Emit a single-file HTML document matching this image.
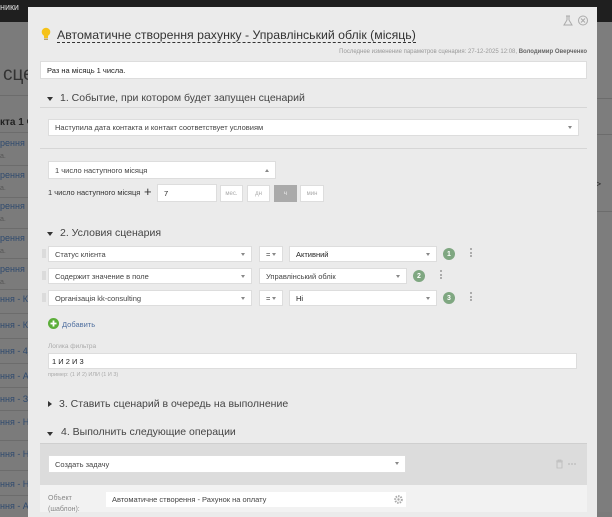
<!DOCTYPE html>
<html><head><meta charset="utf-8"><style>
*{box-sizing:border-box;margin:0;padding:0}
body{width:612px;height:512px;overflow:hidden;position:relative;background:#7b7b7b;font-family:"Liberation Sans","DejaVu Sans",sans-serif;}
.a{position:absolute}
.top{left:0;top:0;width:612px;height:22px;background:#1f1f1f}
.lt{color:#2f4a6e;font-size:9px;left:0}
.lg{color:#555;font-size:7px;left:0}
.sep{left:0;width:28px;height:1px;background:#6c6c6c}
.modal{left:28px;top:7px;width:569px;height:510px;background:#ebebeb}
.in{background:#fff;border:1px solid #ddd;font-size:7.5px;color:#333;padding-left:6px;display:flex;align-items:center}
.hdr{font-size:10.5px;color:#444}
.tri{width:0;height:0;border-left:3px solid transparent;border-right:3px solid transparent;border-top:4px solid #333}
.trr{width:0;height:0;border-top:3px solid transparent;border-bottom:3px solid transparent;border-left:4px solid #333}
.car{position:absolute;right:6px;top:6px;border-left:2.5px solid transparent;border-right:2.5px solid transparent;border-top:3px solid #888}
.line{height:1px;background:#d6d6d6}
.box{background:#fff;border:1px solid #ddd;font-size:6px;color:#aaa;display:flex;align-items:center;justify-content:center}
.badge{width:12px;height:12px;border-radius:6px;background:#7fa781;color:#fff;font-size:7px;font-weight:bold;display:flex;align-items:center;justify-content:center}
.dots{width:2px;font-size:0}
.dots i{display:block;width:2px;height:2px;background:#999;margin-bottom:1.5px;border-radius:1px}
.grip{width:4px;height:9px;background-image:radial-gradient(#aaa 0.6px,transparent 0.7px);background-size:2px 2px}
</style></head><body>
<div class="a top"></div>
<div class="a" style="left:0;top:2px;font-size:9px;color:#ddd">ники</div>
<div class="a" style="left:3px;top:64px;font-size:19px;color:#333">сцен</div>
<div class="a" style="left:0;top:95px;width:28px;height:1px;background:#6c6c6c"></div>
<div class="a" style="left:0;top:117px;font-size:10px;font-weight:bold;color:#222">кта 1 ч</div>
<div class="a sep" style="top:132px"></div>
<div class="a lt" style="top:138px">рення р</div><div class="a lg" style="top:153px">а.</div>
<div class="a sep" style="top:165px"></div>
<div class="a lt" style="top:170px">рення р</div><div class="a lg" style="top:185px">а.</div>
<div class="a sep" style="top:197px"></div>
<div class="a lt" style="top:201px">рення р</div><div class="a lg" style="top:216px">а.</div>
<div class="a sep" style="top:228px"></div>
<div class="a lt" style="top:233px">рення р</div><div class="a lg" style="top:248px">а.</div>
<div class="a sep" style="top:258px"></div>
<div class="a lt" style="top:264px">рення р</div><div class="a lg" style="top:279px">а.</div>
<div class="a sep" style="top:289px"></div>
<div class="a lt" style="top:294px">ння - Кон</div>
<div class="a sep" style="top:313px"></div>
<div class="a lt" style="top:320px">ння - Кон</div>
<div class="a sep" style="top:338px"></div>
<div class="a lt" style="top:346px">ння - 4Д</div>
<div class="a sep" style="top:363px"></div>
<div class="a lt" style="top:371px">ння - Ауд</div>
<div class="a sep" style="top:387px"></div>
<div class="a lt" style="top:394px">ння - Зак</div>
<div class="a sep" style="top:410px"></div>
<div class="a lt" style="top:417px">ння - Нав</div>
<div class="a sep" style="top:440px"></div>
<div class="a lt" style="top:449px">ння - Нав</div>
<div class="a sep" style="top:470px"></div>
<div class="a lt" style="top:479px">ння - Нар</div>
<div class="a sep" style="top:495px"></div>
<div class="a lt" style="top:501px">ння - Ауд</div>

<div class="a" style="left:597px;top:22px;width:15px;height:490px;background:#7d7d7d"></div>
<div class="a" style="left:597px;top:98px;width:15px;height:1px;background:#6c6c6c"></div>
<div class="a" style="left:597px;top:134px;width:15px;height:1px;background:#6c6c6c"></div>
<div class="a" style="left:597px;top:211px;width:15px;height:1px;background:#6c6c6c"></div>
<div class="a" style="left:592px;top:176px;font-size:12px;color:#222">&#x25B7;</div>

<div class="a modal"></div>
<svg class="a" style="left:563px;top:15px" width="26" height="11"><path d="M3 1h4M4 1v4l-3 5h8l-3-5V1" fill="none" stroke="#aaa"/><circle cx="20" cy="5.5" r="4.5" fill="none" stroke="#aaa"/><path d="M18 3.5l4 4M22 3.5l-4 4" stroke="#aaa"/></svg>
<svg class="a" style="left:41px;top:27px" width="10" height="15"><circle cx="5" cy="5" r="4.3" fill="#f5c218"/><rect x="3" y="8" width="4" height="3" fill="#f5c218"/><rect x="3" y="11.5" width="4" height="1.5" fill="#b9a36a"/></svg>
<div class="a" style="left:57px;top:28px;font-size:12.3px;color:#333;border-bottom:1px dashed #333;line-height:14px">Автоматичне створення рахунку - Управлінський облік (місяць)</div>
<div class="a" style="left:300px;top:49px;width:287px;text-align:right;font-size:6px;color:#999">Последнее изменение параметров сценария: 27-12-2025 12:08, <b style="color:#666">Володимир Оверченко</b></div>
<div class="a in" style="left:40px;top:61px;width:547px;height:18px;font-size:7.5px;color:#222">Раз на місяць 1 числа.</div>

<div class="a tri" style="left:47px;top:97px"></div>
<div class="a hdr" style="left:60px;top:92px">1. Событие, при котором будет запущен сценарий</div>
<div class="a line" style="left:40px;top:107px;width:547px"></div>
<div class="a in" style="left:48px;top:119px;width:531px;height:17px;color:#444">Наступила дата контакта и контакт соответствует условиям<span class="car"></span></div>
<div class="a line" style="left:40px;top:148px;width:547px"></div>
<div class="a in" style="left:48px;top:161px;width:228px;height:18px;color:#444">1 число наступного місяця<span class="a" style="right:6px;top:7px;border-left:2.5px solid transparent;border-right:2.5px solid transparent;border-bottom:3px solid #888"></span></div>
<div class="a" style="left:48px;top:188px;font-size:7.5px;color:#333">1 число наступного місяця</div>
<div class="a" style="left:144px;top:184px;font-size:13px;color:#333">+</div>
<div class="a in" style="left:157px;top:184px;width:60px;height:18px;color:#222">7</div>
<div class="a box" style="left:220px;top:185px;width:23px;height:17px">мес.</div>
<div class="a box" style="left:247px;top:185px;width:23px;height:17px">дн</div>
<div class="a box" style="left:274px;top:185px;width:23px;height:17px;background:#aaa;border-color:#aaa;color:#eee">ч</div>
<div class="a box" style="left:300px;top:185px;width:24px;height:17px">мин</div>

<div class="a tri" style="left:47px;top:232px"></div>
<div class="a hdr" style="left:60px;top:227px">2. Условия сценария</div>

<div class="a grip" style="left:42px;top:249px"></div>
<div class="a in" style="left:48px;top:246px;width:204px;height:16px;color:#444">Статус клієнта<span class="car"></span></div>
<div class="a in" style="left:259px;top:246px;width:24px;height:16px;color:#444">=<span class="car"></span></div>
<div class="a in" style="left:289px;top:246px;width:148px;height:16px;color:#222">Активний<span class="car"></span></div>
<div class="a badge" style="left:443px;top:248px">1</div>
<div class="a dots" style="left:470px;top:248px"><i></i><i></i><i></i></div>

<div class="a grip" style="left:42px;top:271px"></div>
<div class="a in" style="left:48px;top:268px;width:204px;height:16px;color:#444">Содержит значение в поле<span class="car"></span></div>
<div class="a in" style="left:259px;top:268px;width:148px;height:16px;color:#444">Управлінський облік<span class="car"></span></div>
<div class="a badge" style="left:413px;top:270px">2</div>
<div class="a dots" style="left:440px;top:270px"><i></i><i></i><i></i></div>

<div class="a grip" style="left:42px;top:293px"></div>
<div class="a in" style="left:48px;top:290px;width:204px;height:16px;color:#444">Організація kk-consulting<span class="car"></span></div>
<div class="a in" style="left:259px;top:290px;width:24px;height:16px;color:#444">=<span class="car"></span></div>
<div class="a in" style="left:289px;top:290px;width:148px;height:16px;color:#222">Ні<span class="car"></span></div>
<div class="a badge" style="left:443px;top:292px">3</div>
<div class="a dots" style="left:470px;top:292px"><i></i><i></i><i></i></div>

<svg class="a" style="left:48px;top:318px" width="11" height="11"><circle cx="5.5" cy="5.5" r="5.5" fill="#5cae3a"/><path d="M5.5 2.5v6M2.5 5.5h6" stroke="#fff" stroke-width="1.8"/></svg>
<div class="a" style="left:62px;top:320px;font-size:7.5px;color:#4f6f9f">Добавить</div>
<div class="a" style="left:48px;top:343px;font-size:6.5px;color:#aaa">Логика фильтра</div>
<div class="a in" style="left:48px;top:353px;width:529px;height:16px;color:#222;padding-left:3px">1 И 2 И 3</div>
<div class="a" style="left:48px;top:372px;font-size:5.5px;color:#aaa">пример: (1 И 2) ИЛИ (1 И 3)</div>

<div class="a trr" style="left:48px;top:401px"></div>
<div class="a hdr" style="left:59px;top:398px">3. Ставить сценарий в очередь на выполнение</div>
<div class="a tri" style="left:47px;top:432px"></div>
<div class="a hdr" style="left:61px;top:426px">4. Выполнить следующие операции</div>

<div class="a" style="left:40px;top:443px;width:547px;height:42px;background:#dcdcdc;border-top:1px solid #cfcfcf"></div>
<div class="a in" style="left:48px;top:455px;width:358px;height:18px;color:#444">Создать задачу<span class="car"></span></div>
<svg class="a" style="left:555px;top:459px" width="22" height="10"><path d="M1 2h7M3 2V1h3v1M2 3h5v6H2z" fill="none" stroke="#bbb" stroke-width="0.8"/><circle cx="14" cy="5" r="0.9" fill="#bbb"/><circle cx="17" cy="5" r="0.9" fill="#bbb"/><circle cx="20" cy="5" r="0.9" fill="#bbb"/></svg>
<div class="a" style="left:40px;top:485px;width:547px;height:27px;background:#f2f2f2"></div>
<div class="a" style="left:48px;top:493px;font-size:7px;color:#888;line-height:11px">Объект<br>(шаблон):</div>
<div class="a in" style="left:106px;top:492px;width:300px;height:15px;color:#444;border:none">Автоматичне створення - Рахунок на оплату</div>
<svg class="a" style="left:394px;top:495px" width="9" height="9"><circle cx="4.5" cy="4.5" r="3.3" fill="none" stroke="#aaa" stroke-width="2" stroke-dasharray="1.5 1"/><circle cx="4.5" cy="4.5" r="1.2" fill="#aaa"/></svg>
</body></html>
